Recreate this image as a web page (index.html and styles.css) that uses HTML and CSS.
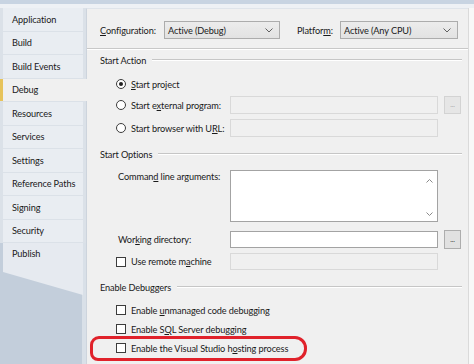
FILE: index.html
```html
<!DOCTYPE html>
<html>
<head>
<meta charset="utf-8">
<link rel="stylesheet" href="styles.css">
</head>
<body>
<div class="topbar"></div>
<div class="main">
  <nav class="tabs">
    <div class="tablist">
      <div class="tab">Application</div>
      <div class="tab">Build</div>
      <div class="tab">Build Events</div>
      <div class="tab active">Debug</div>
      <div class="tab">Resources</div>
      <div class="tab">Services</div>
      <div class="tab">Settings</div>
      <div class="tab">Reference Paths</div>
      <div class="tab">Signing</div>
      <div class="tab">Security</div>
    </div>
    <div class="tab last">Publish</div>
  </nav>
  <section class="panel">
    <div class="config">
      <span class="lbl"><u>C</u>onfiguration:</span>
      <div class="select"><span>Active (Debug)</span><svg class="chev" width="8" height="5" viewBox="0 0 8 5"><path d="M0.5 0.5 L4 4 L7.5 0.5" fill="none" stroke="#606060" stroke-width="1"/></svg></div>
      <span></span>
      <span class="lbl">Platfor<u>m</u>:</span>
      <div class="select"><span>Active (Any CPU)</span><svg class="chev" width="8" height="5" viewBox="0 0 8 5"><path d="M0.5 0.5 L4 4 L7.5 0.5" fill="none" stroke="#606060" stroke-width="1"/></svg></div>
    </div>
    <div class="sep"></div>

    <div class="group g1"><span>Start Action</span><i class="rule"></i></div>
    <div class="opt r1">
      <label class="choice"><span class="radio on"></span><span><u>S</u>tart project</span></label>
    </div>
    <div class="opt r2">
      <label class="choice"><span class="radio"></span><span>Start e<u>x</u>ternal program:</span></label>
      <div class="box dis"></div>
      <div class="btn dis">...</div>
    </div>
    <div class="opt r3">
      <label class="choice"><span class="radio"></span><span>Start browser with U<u>R</u>L:</span></label>
      <div class="box dis"></div>
    </div>

    <div class="group g2"><span>Start Options</span><i class="rule"></i></div>
    <div class="opt cmd">
      <span class="plain">Comman<u>d</u> line arguments:</span>
      <div class="box area">
        <svg class="sc up" width="7" height="4" viewBox="0 0 7 4"><path d="M0.5 3.5 L3.5 0.5 L6.5 3.5" fill="none" stroke="#8a8a8a"/></svg>
        <svg class="sc down" width="7" height="4" viewBox="0 0 7 4"><path d="M0.5 0.5 L3.5 3.5 L6.5 0.5" fill="none" stroke="#8a8a8a"/></svg>
      </div>
    </div>
    <div class="opt wd">
      <span class="plain">Wor<u>k</u>ing directory:</span>
      <div class="box white"></div>
      <div class="btn">...</div>
    </div>
    <div class="opt rm">
      <label class="choice"><span class="check"></span><span>Use remote m<u>a</u>chine</span></label>
      <div class="box dis"></div>
    </div>

    <div class="group g3"><span>Enable Debuggers</span><i class="rule"></i></div>
    <div class="opt c1">
      <label class="choice"><span class="check"></span><span>Enable <u>u</u>nmanaged code debugging</span></label>
    </div>
    <div class="opt c2">
      <label class="choice"><span class="check"></span><span>Enable S<u>Q</u>L Server debugging</span></label>
    </div>
    <div class="opt c3">
      <label class="choice"><span class="check"></span><span>Enable the Visual Studio h<u>o</u>sting process</span></label>
      <span class="mark"></span>
    </div>
  </section>
  <div class="edge"></div>
</div>
</body>
</html>
```
FILE: styles.css
```css
* { box-sizing: border-box; }
body {
  margin: 0;
  width: 474px;
  height: 364px;
  overflow: hidden;
  background: #eef1f5;
  font-family: Lato, "Open Sans", sans-serif;
  font-size: 9.2px;
  letter-spacing: -0.12px;
  color: #1a1a1a;
}
u { text-decoration-thickness: 1px; text-underline-offset: 1px; }
.topbar { height: 4px; background: #c8d4e2; }
.main { display: flex; height: 360px; padding-top: 4px; }

.tabs {
  width: 86px;
  flex: none;
  display: flex;
  flex-direction: column;
  background: linear-gradient(to right, #c3cedb 82px, #d9e0e8 82px);
}
.tablist {
  display: flex;
  flex-direction: column;
  gap: 1px;
  padding-bottom: 1px;
  background: #dbe1e8;
}
.tab {
  height: 22.5px;
  width: 80px;
  margin-left: 3px;
  padding-left: 9px;
  display: flex;
  align-items: center;
  background: #e9edf2;
  white-space: nowrap;
}
.tab.active {
  width: 87px;
  margin-left: 0;
  margin-right: -1px;
  border-left: 3px solid #e7c35a;
  background: #f0f0f0;
  position: relative;
  z-index: 1;
}
.tab.last {
  height: 52px;
  align-items: flex-start;
  padding-top: 4.5px;
  clip-path: polygon(0 0, 100% 0, 100% 100%, 0 56%);
  background: #e6eaf0;
}

.panel {
  flex: 1;
  display: flex;
  flex-direction: column;
  background: #f0f0f0;
  border-left: 1px solid #cdd4dd;
  border-top: 1px solid #dfe4ea;
  position: relative;
}
.edge {
  width: 6px;
  flex: none;
  background: #f8f8f8;
  border-left: 1px solid #dadada;
}

.config {
  margin-top: 12px;
  height: 18px;
  padding-left: 13px;
  display: grid;
  grid-template-columns: 64px 116px 17px 43px 118px;
  align-items: center;
}
.lbl { white-space: nowrap; }
.select {
  height: 18px;
  border: 1px solid #acacac;
  background: linear-gradient(#ececec, #e2e2e2);
  display: flex;
  align-items: center;
  justify-content: space-between;
  padding: 0 6px 0 3px;
}
.sep {
  margin-top: 9px;
  height: 2px;
  border-top: 1px solid #c8c8c8;
  border-bottom: 1px solid #ffffff;
}

.group {
  height: 16px;
  padding-left: 13px;
  padding-right: 6px;
  display: flex;
  align-items: center;
  gap: 6px;
  white-space: nowrap;
}
.rule {
  flex: 1;
  height: 2px;
  border-top: 1px solid #c6c6c6;
  border-bottom: 1px solid #ffffff;
}
.g1 { margin-top: 2px; }
.g2 { margin-top: 9px; }
.g3 { margin-top: 9px; }

.opt {
  height: 18px;
  padding-left: 29px;
  display: grid;
  grid-template-columns: 114px 208px 17px;
  align-items: center;
  position: relative;
}
.r1 { margin-top: 7px; }
.r2 { margin-top: 3px; }
.r3 { margin-top: 5px; }
.cmd { margin-top: 8px; height: 52px; align-items: start; }
.cmd .plain { margin-top: 1px; }
.wd { margin-top: 8px; height: 19px; }
.rm { margin-top: 4px; height: 17px; }
.c1 { margin-top: 6px; }
.c2 { margin-top: 1px; }
.c3 { margin-top: 1px; }

.choice {
  display: flex;
  align-items: center;
  gap: 5px;
  white-space: nowrap;
}
.plain { padding-left: 2px; white-space: nowrap; }

.radio {
  width: 10px;
  height: 10px;
  border: 1px solid #3c3c3c;
  border-radius: 50%;
  background: #fff;
  display: flex;
  align-items: center;
  justify-content: center;
  flex: none;
}
.radio.on::after {
  content: "";
  width: 4px;
  height: 4px;
  border-radius: 50%;
  background: #222;
}
.check {
  width: 10px;
  height: 10px;
  border: 1px solid #3c3c3c;
  background: #fff;
  flex: none;
}

.box { height: 18px; border: 1px solid #d9d9d9; background: #f0f0f0; }
.box.white { height: 17px; background: #fff; border-color: #a3a3a3; }
.box.area {
  height: 52px;
  background: #fff;
  border-color: #a3a3a3;
  position: relative;
}
.sc { position: absolute; right: 4px; }
.sc.up { top: 8px; }
.sc.down { bottom: 5px; }
.rm .box { height: 17px; }

.btn {
  margin-left: 6px;
  width: 17px;
  height: 19px;
  border: 1px solid #adadad;
  background: #e1e1e1;
  display: flex;
  align-items: center;
  justify-content: center;
  font-size: 7px;
  color: #333;
  padding-bottom: 2px;
}
.btn.dis { height: 18px; border-color: #d3d3d3; background: #e6e6e6; color: #a8a8a8; }

.mark {
  position: absolute;
  left: 3px;
  top: -3px;
  width: 217px;
  height: 25px;
  border: 3px solid #e0222b;
  border-radius: 9px 12px 12px 8px;
}
```
